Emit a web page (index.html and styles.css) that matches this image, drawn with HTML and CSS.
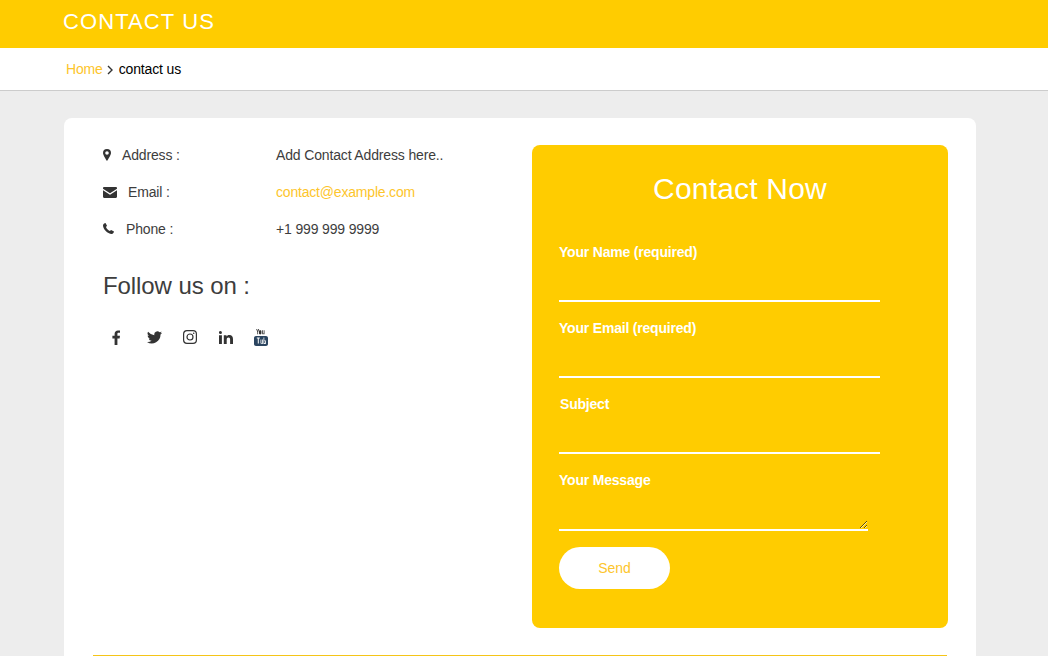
FILE: index.html
```html
<!DOCTYPE html>
<html lang="en">
<head>
<meta charset="utf-8">
<title>Contact Us</title>
<link rel="stylesheet" href="styles.css">
</head>
<body>
<header class="banner"><h1 class="banner-title">CONTACT US</h1></header>
<nav class="crumbs">
  <a class="crumb-link" href="#">Home</a>
  <svg class="crumb-sep" viewBox="0 0 6 10" width="6" height="10"><path d="M1 1l4 4-4 4" fill="none" stroke="#333" stroke-width="1.4"/></svg>
  <span class="crumb-current">contact us</span>
</nav>
<main class="page">
  <section class="card">
    <div class="columns">
      <div class="info">
        <div class="info-row">
          <div class="info-label">
            <svg class="ico ico-pin" viewBox="0 0 8 12" width="8" height="12"><path fill-rule="evenodd" d="M4 0a4 4 0 0 1 4 4c0 1.800-2.600 6-4 8C2.600 10 0 5.800 0 4a4 4 0 0 1 4-4zm0 2.200a1.800 1.800 0 1 0 0 3.600 1.800 1.800 0 0 0 0-3.600z"/></svg>
            <span>Address :</span>
          </div>
          <span>Add Contact Address here..</span>
        </div>
        <div class="info-row">
          <div class="info-label">
            <svg class="ico ico-mail" viewBox="0 0 14 11" width="14" height="11"><path d="M0 1.200C0 .5.500 0 1.200 0h11.600C13.500 0 14 .5 14 1.200v.6L7 6.300 0 1.800zM0 3.300l7 4.500 7-4.500v6.500c0 .7-.5 1.200-1.200 1.200H1.200C.5 11 0 10.500 0 9.800z"/></svg>
            <span>Email :</span>
          </div>
          <a class="info-link" href="#">contact@example.com</a>
        </div>
        <div class="info-row">
          <div class="info-label">
            <svg class="ico ico-phone" viewBox="0 0 11 11" width="11" height="11"><path d="M2.500 0L4 2.800 3 4c.5 1.500 2 3.200 3.800 4l1.300-1.100L11 8.600c0 1-1 2.400-2.300 2.400C4.500 11 0 6 0 2.300 0 1 1.500 0 2.500 0z"/></svg>
            <span>Phone :</span>
          </div>
          <span>+1 999 999 9999</span>
        </div>
        <h2 class="follow-title">Follow us on :</h2>
        <div class="socials">
          <a class="social" href="#"><svg viewBox="0 0 9 15" width="9" height="15"><path d="M2.600 15V8.400H.4V5.800h2.200V3.900C2.600 1.600 4 .4 6 .4c1 0 1.800.1 2 .1v2.300H6.700c-1.100 0-1.300.5-1.300 1.300v1.700H8l-.4 2.600H5.400V15z"/></svg></a>
          <a class="social" href="#"><svg viewBox="0 0 24 20" width="15" height="13"><path d="M24 2.400a10 10 0 0 1-2.800.8A5 5 0 0 0 23.300.5a9.800 9.800 0 0 1-3.100 1.200 4.900 4.900 0 0 0-8.400 4.500A14 14 0 0 1 1.700.9a4.900 4.900 0 0 0 1.500 6.600c-.8 0-1.600-.2-2.200-.6 0 2.400 1.700 4.400 3.900 4.900-.7.200-1.500.2-2.200.1a4.900 4.900 0 0 0 4.600 3.400A9.900 9.900 0 0 1 0 17.300 14 14 0 0 0 21.600 5c1-.7 1.800-1.600 2.400-2.600z"/></svg></a>
          <a class="social" href="#"><svg viewBox="0 0 14 14" width="14" height="14"><rect x=".6" y=".6" width="12.800" height="12.800" rx="3.400" fill="none" stroke="#333" stroke-width="1.200"/><circle cx="7" cy="7" r="3" fill="none" stroke="#333" stroke-width="1.200"/><circle cx="10.700" cy="3.300" r=".8"/></svg></a>
          <a class="social" href="#"><svg viewBox="0 0 14 13" width="14" height="13"><path d="M0 4.300h2.900V13H0zM1.450 0a1.500 1.500 0 1 1 0 3 1.500 1.500 0 0 1 0-3zM4.800 4.300h2.700v1.200C8 4.600 9 4 10.300 4 13 4 14 5.600 14 8.300V13h-2.900V8.800c0-1.200-.3-2.200-1.500-2.200-1.300 0-1.900.9-1.900 2.200V13H4.800z"/></svg></a>
          <a class="social" href="#"><svg viewBox="0 0 14 17" width="14" height="17"><path d="M2.200 0h.9l.6 2 .6-2h.9L4.100 3v2.300h-.8V3zM6.200 1.200c.8 0 1.200.5 1.200 1.200v1.800c0 .7-.4 1.200-1.200 1.200S5 4.900 5 4.200V2.400c0-.7.400-1.200 1.200-1.200zM8.200 1.300H9v3.200c.2.200.5.100.7-.1V1.300h.8v4h-.8v-.4c-.6.600-1.400.5-1.500-.2z"/><path fill-rule="evenodd" fill="#2b4560" d="M2 7h10c1.100 0 2 .9 2 2v6c0 1.100-.9 2-2 2H2c-1.100 0-2-.9-2-2V9c0-1.100.9-2 2-2zm.8 1.600v1h1v5h1v-5h1v-1zm3.700 2v3.500c0 .8.800 1 1.500.4v.5h.8v-4.400H8v3.200c-.3.300-.7.300-.7 0v-3.200zm3 -2v6.500h.8v-.4c.7.700 1.600.4 1.600-.5v-2c0-1-.9-1.300-1.600-.6V8.600zm.8 3.200c.3-.3.800-.2.800.2v1.700c0 .4-.5.500-.8.200z"/></svg></a>
        </div>
      </div>
      <form class="panel">
        <h3 class="panel-title">Contact Now</h3>
        <label class="field"><span class="field-label">Your Name (required)</span><input class="field-input" type="text"></label>
        <label class="field"><span class="field-label">Your Email (required)</span><input class="field-input" type="email"></label>
        <label class="field"><span class="field-label field-label-shift">Subject</span><input class="field-input" type="text"></label>
        <label class="field"><span class="field-label">Your Message</span><textarea class="field-area"></textarea></label>
        <button class="send" type="button">Send</button>
      </form>
    </div>
    <hr class="rule">
  </section>
</main>
</body>
</html>
```
FILE: styles.css
```css
* { box-sizing: border-box; }
html, body { height: 100%; }
body {
  margin: 0;
  height: 656px;
  overflow: hidden;
  background: #ededed;
  font-family: "Liberation Sans", Arial, sans-serif;
  font-size: 14px;
  color: #3d3d3d;
}
a { text-decoration: none; }
.banner { height: 48px; background: #ffcc00; padding: 9px 0 0 63px; }
.banner-title {
  margin: 0;
  font-size: 22px;
  line-height: 26px;
  font-weight: 400;
  letter-spacing: 1.1px;
  color: #fff;
}
.crumbs {
  height: 43px;
  background: #fff;
  border-bottom: 1px solid #ccc;
  padding-left: 66px;
  display: flex;
  align-items: center;
  letter-spacing: -0.15px;
}
.crumb-link { color: #fdc52c; }
.crumb-sep { margin: 1px 6px 0 4px; }
.crumb-current { color: #000; }
.page { padding: 27px 72px 0 64px; }
.card {
  background: #fff;
  border-radius: 8px 8px 0 0;
  padding: 27px 28px 0 29px;
}
.columns { display: flex; justify-content: space-between; }
.info { width: 420px; padding: 0 0 0 10px; letter-spacing: -0.15px; }
.info-row { display: flex; height: 37px; line-height: 20px; }
.info-label { width: 173px; display: flex; align-items: flex-start; height: 20px; }
.ico { fill: #333; flex: none; margin-top: 4px; }
.ico-pin { margin-right: 11px; }
.ico-mail { margin: 5px 11px 0 0; }
.ico-phone { margin: 4px 12px 0 0; }
.info-link { color: #fdc52c; letter-spacing: -0.19px; }
.follow-title {
  margin: 15px 0 0;
  font-size: 24px;
  line-height: 30px;
  font-weight: 400;
  letter-spacing: -0.08px;
}
.socials { display: flex; align-items: center; margin-top: 26px; height: 20px; }
.social { display: flex; width: 35.600px; justify-content: center; fill: #333; }
.socials .social:first-child { margin-left: -4px; margin-right: 2px; }
.panel {
  width: 416px;
  height: 483px;
  background: #ffcc00;
  border-radius: 8px;
  padding: 27px 27px 0;
  color: #fff;
}
.panel-title {
  margin: 0 0 36px;
  font-size: 30px;
  line-height: 34px;
  font-weight: 400;
  letter-spacing: 0.2px;
  text-align: center;
}
.field { display: block; height: 76px; }
.field-label { display: block; font-weight: 700; line-height: 20px; letter-spacing: -0.2px; }
.field-label-shift { padding-left: 1px; }
.field-input {
  display: block;
  width: 321px;
  height: 30px;
  margin-top: 10px;
  background: transparent;
  border: 0;
  border-bottom: 2px solid #fff;
  outline: 0;
}
.field-area {
  display: block;
  width: 309px;
  height: 31px;
  margin-top: 10px;
  background: transparent;
  border: 0;
  border-bottom: 2px solid #fff;
  outline: 0;
  padding: 0;
}
.send {
  display: block;
  width: 111px;
  height: 42px;
  margin-top: 1px;
  border: 0;
  border-radius: 21px;
  background: #fff;
  color: #fdc52c;
  font: 14px "Liberation Sans", Arial, sans-serif;
}
.rule { margin: 27px 1px 0 0; border: 0; border-top: 1px solid #f5c518; }
```
